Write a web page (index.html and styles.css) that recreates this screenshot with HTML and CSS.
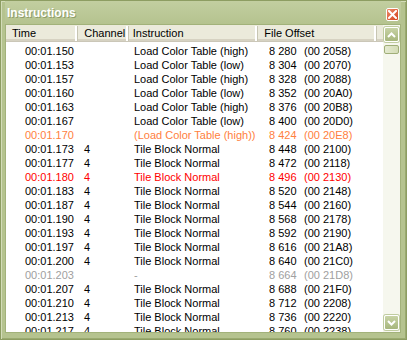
FILE: index.html
```html
<!DOCTYPE html>
<html lang="en">
<head>
    <meta charset="UTF-8">
    <title>Instructions</title>
    <link rel="stylesheet" href="styles.css">
</head>
<body>
    <div class="window">
        <div class="titlebar">
            <span class="title">Instructions</span>
            <span class="close">
                <svg width="9" height="9" viewBox="0 0 9 9"><path d="M1 1 L8 8 M8 1 L1 8" stroke="#fff" stroke-width="2" stroke-linecap="square"/></svg>
            </span>
        </div>
        <div class="client">
            <div class="list">
                <div class="header">
                    <div class="col c-time">Time</div>
                    <div class="col c-chan">Channel</div>
                    <div class="col c-instr">Instruction</div>
                    <div class="col c-off">File Offset</div>
                    <div class="col c-fill"></div>
                </div>
                <div class="rows">
                    <div class="row"><span class="time">00:01.150</span><span></span><span>Load Color Table (high)</span><span><i>8 280</i>(00 2058)</span></div>
                    <div class="row"><span class="time">00:01.153</span><span></span><span>Load Color Table (low)</span><span><i>8 304</i>(00 2070)</span></div>
                    <div class="row"><span class="time">00:01.157</span><span></span><span>Load Color Table (high)</span><span><i>8 328</i>(00 2088)</span></div>
                    <div class="row"><span class="time">00:01.160</span><span></span><span>Load Color Table (low)</span><span><i>8 352</i>(00 20A0)</span></div>
                    <div class="row"><span class="time">00:01.163</span><span></span><span>Load Color Table (high)</span><span><i>8 376</i>(00 20B8)</span></div>
                    <div class="row"><span class="time">00:01.167</span><span></span><span>Load Color Table (low)</span><span><i>8 400</i>(00 20D0)</span></div>
                    <div class="row orange"><span class="time">00:01.170</span><span></span><span>(Load Color Table (high))</span><span><i>8 424</i>(00 20E8)</span></div>
                    <div class="row"><span class="time">00:01.173</span><span>4</span><span>Tile Block Normal</span><span><i>8 448</i>(00 2100)</span></div>
                    <div class="row"><span class="time">00:01.177</span><span>4</span><span>Tile Block Normal</span><span><i>8 472</i>(00 2118)</span></div>
                    <div class="row red"><span class="time">00:01.180</span><span>4</span><span>Tile Block Normal</span><span><i>8 496</i>(00 2130)</span></div>
                    <div class="row"><span class="time">00:01.183</span><span>4</span><span>Tile Block Normal</span><span><i>8 520</i>(00 2148)</span></div>
                    <div class="row"><span class="time">00:01.187</span><span>4</span><span>Tile Block Normal</span><span><i>8 544</i>(00 2160)</span></div>
                    <div class="row"><span class="time">00:01.190</span><span>4</span><span>Tile Block Normal</span><span><i>8 568</i>(00 2178)</span></div>
                    <div class="row"><span class="time">00:01.193</span><span>4</span><span>Tile Block Normal</span><span><i>8 592</i>(00 2190)</span></div>
                    <div class="row"><span class="time">00:01.197</span><span>4</span><span>Tile Block Normal</span><span><i>8 616</i>(00 21A8)</span></div>
                    <div class="row"><span class="time">00:01.200</span><span>4</span><span>Tile Block Normal</span><span><i>8 640</i>(00 21C0)</span></div>
                    <div class="row gray"><span class="time">00:01.203</span><span></span><span>-</span><span><i>8 664</i>(00 21D8)</span></div>
                    <div class="row"><span class="time">00:01.207</span><span>4</span><span>Tile Block Normal</span><span><i>8 688</i>(00 21F0)</span></div>
                    <div class="row"><span class="time">00:01.210</span><span>4</span><span>Tile Block Normal</span><span><i>8 712</i>(00 2208)</span></div>
                    <div class="row"><span class="time">00:01.213</span><span>4</span><span>Tile Block Normal</span><span><i>8 736</i>(00 2220)</span></div>
                    <div class="row"><span class="time">00:01.217</span><span>4</span><span>Tile Block Normal</span><span><i>8 760</i>(00 2238)</span></div>
                </div>
            </div>
            <div class="scrollbar">
                <div class="sbtn">
                    <svg width="9" height="6" viewBox="0 0 9 6"><path d="M1 5 L4.5 1.5 L8 5" stroke="#fff" stroke-width="2" fill="none"/></svg>
                </div>
                <div class="thumb"></div>
                <div class="track"></div>
                <div class="sbtn">
                    <svg width="9" height="6" viewBox="0 0 9 6"><path d="M1 1 L4.5 4.5 L8 1" stroke="#fff" stroke-width="2" fill="none"/></svg>
                </div>
            </div>
        </div>
    </div>
</body>
</html>
```

FILE: styles.css
```css
* {
    box-sizing: border-box;
    margin: 0;
    padding: 0;
}

body {
    font-family: 'Liberation Sans', Arial, sans-serif;
    font-size: 11px;
    background: #ffffff;
}

.window {
    width: 407px;
    height: 340px;
    background: #b5c38f;
    border: 1px solid #8d9d62;
    box-shadow: inset 1px 1px 0 #d3dcb8, inset -1px -1px 0 #9aaa70;
    display: flex;
    flex-direction: column;
    padding: 0 5px 6px 4px;
}

.titlebar {
    height: 23px;
    display: flex;
    align-items: center;
    justify-content: space-between;
    padding: 1px 2px 0 2px;
    background: linear-gradient(#c2cea0, #b5c38f);
}

.title {
    color: #ffffff;
    font-weight: bold;
    font-size: 12px;
    text-shadow: 1px 1px 0 #8f9d6a;
}

.close {
    width: 13px;
    height: 13px;
    background: linear-gradient(135deg, #ec8a6a, #d4431c);
    border: 1px solid #ffffff;
    border-radius: 2px;
    display: flex;
    align-items: center;
    justify-content: center;
    margin-top: 2px;
}

.client {
    flex: 1;
    display: flex;
    background: #ffffff;
    border: 1px solid #a2b27a;
    overflow: hidden;
}

.list {
    flex: 1;
    overflow: hidden;
}

.header {
    display: flex;
    height: 17px;
    background: #ebeadb;
    border-bottom: 1px solid #cbc7b8;
    box-shadow: inset 0 -2px 0 #d6d2c2;
    line-height: 16px;
    color: #000;
}

.col {
    padding-left: 6px;
    border-right: 1px solid #c7c5b2;
    box-shadow: inset -2px 0 0 #ffffff;
    height: 15px;
    margin-top: 1px;
    line-height: 14px;
}

.c-time { width: 73px; }
.c-chan { width: 51px; }
.c-instr { width: 131px; padding-left: 4px; }
.c-off { width: 120px; }
.c-fill { flex: 1; border-right: none; box-shadow: none; }

.rows {
    padding-top: 2px;
}

.row {
    display: grid;
    grid-template-columns: 73px 51px 131px 1fr;
    height: 14px;
    line-height: 14px;
    color: #000;
    white-space: nowrap;
}

.row span {
    padding-left: 5px;
}

.row .time {
    padding-left: 19px;
}

.row span:nth-child(3) {
    padding-left: 4px;
}

.row span:nth-child(4) {
    padding-left: 8px;
}

.row i {
    font-style: normal;
    display: inline-block;
    width: 35px;
}

.row.orange { color: #ff8040; }
.row.red { color: #ff0000; }
.row.gray { color: #a0a0a0; }

.scrollbar {
    width: 17px;
    display: flex;
    flex-direction: column;
    background: #f6f7ee;
    padding: 2px 1px 2px 1px;
}

.sbtn {
    height: 15px;
    border: 1px solid #ffffff;
    border-radius: 2px;
    background: linear-gradient(#c8d3a6, #a6b67c);
    display: flex;
    align-items: center;
    justify-content: center;
    box-shadow: 0 0 0 1px #c0cca0;
}

.thumb {
    height: 9px;
    margin-top: 3px;
    border: 1px solid #a0ae78;
    border-radius: 2px;
    background: linear-gradient(90deg, #e4ead0, #d4dcb6);
}

.track {
    flex: 1;
}
```
